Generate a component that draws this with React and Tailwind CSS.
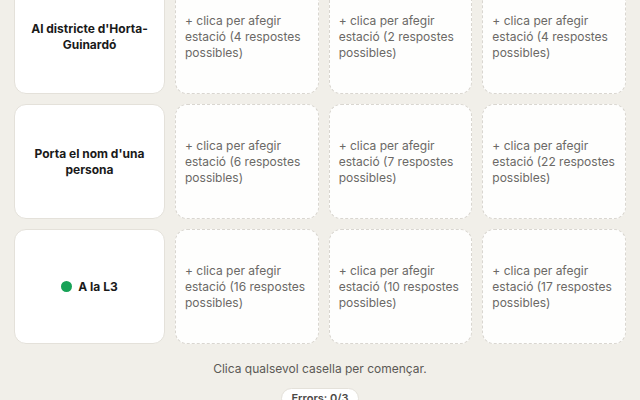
import React from 'react';

const rows = [
  { label: "Al districte d'Horta-Guinardó", counts: [4, 2, 4] },
  { label: "Porta el nom d'una persona", counts: [6, 7, 22] },
  { label: 'A la L3', dot: true, counts: [16, 10, 17] },
];

function HeaderCell({ label, dot }) {
  return (
    <div className="h-[115px] rounded-[12px] border border-[#e4e1da] bg-white flex items-center justify-center px-[12px] text-center">
      <div className="flex items-center gap-[6px] text-[12px] leading-[16px] font-bold text-[#1a1a1a]">
        {dot && <span className="w-[11px] h-[11px] rounded-full bg-[#17a257] shrink-0" />}
        <span>{label}</span>
      </div>
    </div>
  );
}

function EmptyCell({ n }) {
  return (
    <button className="h-[115px] rounded-[12px] border-[1.5px] border-dashed border-[#d9d6d0] bg-[#fefefd] flex items-center px-[9px] text-left">
      <span className="text-[12px] leading-[16px] text-[#6b6966]">
        + clica per afegir estació ({n} respostes possibles)
      </span>
    </button>
  );
}

export default function App() {
  return (
    <div
      className="w-[640px] h-[400px] overflow-hidden bg-[#f1efe9]"
      style={{ fontFamily: 'Inter, "Noto Sans", sans-serif' }}
    >
      <div className="-mt-[21px] px-[14px] grid grid-cols-[151px_1fr_1fr_1fr] gap-[10px]">
        {rows.map((r, i) => (
          <React.Fragment key={i}>
            <HeaderCell label={r.label} dot={r.dot} />
            {r.counts.map((n, j) => (
              <EmptyCell key={j} n={n} />
            ))}
          </React.Fragment>
        ))}
      </div>

      <p className="mt-[17px] text-center text-[12px] leading-[16px] text-[#5b5955]">
        Clica qualsevol casella per començar.
      </p>

      <div className="mt-[11px] flex justify-center">
        <span className="px-[9px] py-[2px] rounded-full border border-[#e4e1da] bg-white text-[11px] leading-[15px] font-semibold text-[#4a4845]">
          Errors: 0/3
        </span>
      </div>
    </div>
  );
}
